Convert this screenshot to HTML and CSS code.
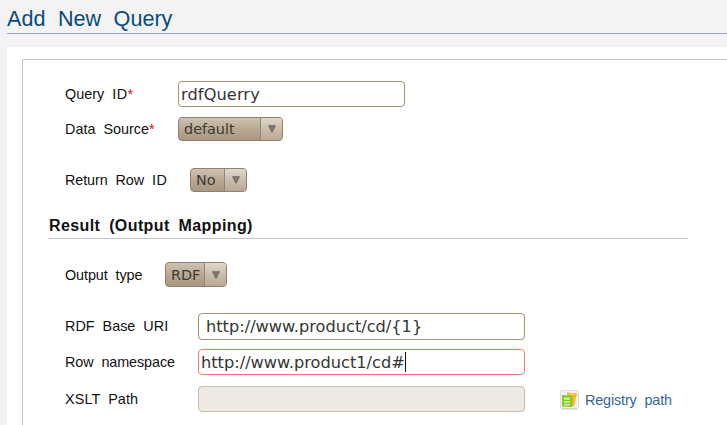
FILE: index.html
```html
<!DOCTYPE html>
<html lang="en">
<head>
<meta charset="utf-8">
<title>Add New Query</title>
<link rel="stylesheet" href="styles.css">
</head>
<body>
<h1 class="title">Add New Query</h1>
<main class="page">
<form class="panel">
  <div class="row query-id"><label class="label">Query <span class="caps">ID</span><span class="req">*</span></label><div class="field short">rdfQuerry</div></div>
  <div class="row data-source"><label class="label">Data Source<span class="req">*</span></label><div class="select"><span class="value">default</span><span class="arrow"><svg viewBox="0 0 8 8" width="8" height="8"><path d="M.6.7h6.8L4 7.3z"/></svg></span></div></div>
  <div class="row row-id"><label class="label">Return Row <span class="caps">ID</span></label><div class="select"><span class="value">No</span><span class="arrow"><svg viewBox="0 0 8 8" width="8" height="8"><path d="M.6.7h6.8L4 7.3z"/></svg></span></div></div>
  <h2 class="section">Result (Output Mapping)</h2>
  <div class="row output"><label class="label">Output type</label><div class="select"><span class="value">RDF</span><span class="arrow"><svg viewBox="0 0 8 8" width="8" height="8"><path d="M.6.7h6.8L4 7.3z"/></svg></span></div></div>
  <div class="row base"><label class="label">RDF Base URI</label><div class="field tall">http://www.product/cd/{1}</div></div>
  <div class="row namespace"><label class="label">Row namespace</label><div class="field focused">http://www.product1/cd#<span class="caret"></span></div></div>
  <div class="row xslt"><label class="label">XSLT Path</label><div class="field disabled"></div>
    <a class="registry"><svg class="icon" viewBox="0 0 20 20" width="20" height="20"><rect x=".5" y=".5" width="18" height="18" rx="2" fill="#f2f2f2" stroke="#dcdcdc"/><path d="M1.500 19h16" stroke="#c8c8c8"/><path d="M7 2.500l10 .8-3 12.700-5 .5z" fill="#efb02a"/><path d="M9 3.800l6 .5M13.500 8h2M13.500 11.500h1.300" stroke="#ffe08a"/><path d="M2 5l10 .5v11.500L2 16.500z" fill="#84c928"/><path d="M4 7.500h6v2.200H4zM4 11h6v1.700H4zM4 14h6v1.500H4z" fill="#d3efa4"/></svg>Registry path</a>
  </div>
</form>
</main>
</body>
</html>
```
FILE: styles.css
```css
* { box-sizing: border-box; }
body {
  margin: 0;
  height: 425px;
  overflow: hidden;
  background: #f3f3f3;
  font-family: "Liberation Sans", sans-serif;
  font-size: 14.4px;
  color: #111;
}
.title {
  margin: 0 0 0 7px;
  height: 34px;
  border-bottom: 1px solid #9aa5c3;
  font-size: 21.6px;
  font-weight: 400;
  line-height: 38px;
  word-spacing: 6.5px;
  color: #084b7c;
}
.page {
  margin: 13px 0 0 7px;
  padding: 12px 0 0 15px;
  background: #fff;
  height: 378px;
}
.panel {
  border: 1px solid #c4c4c4;
  border-width: 1px 0 0 1px;
  height: 366px;
  padding: 21px 0 0 26px;
}
.row { display: flex; align-items: center; padding-left: 16px; }
.label { width: 133px; flex: none; white-space: nowrap; word-spacing: 4px; }
.caps { letter-spacing: .5px; }
.req { color: #f00; }
.query-id .label, .data-source .label { width: 113px; }
.data-source { margin-top: 10px; }
.row-id { margin-top: 27px; }
.row-id .label { width: 125px; letter-spacing: -.1px; }
.section {
  margin: 23px 0 0;
  width: 639px;
  height: 24px;
  border-bottom: 1px solid #c4c4c4;
  font-size: 16px;
  line-height: 22px;
  letter-spacing: .4px;
  word-spacing: 4px;
}
.output { margin-top: 23px; }
.output .label { width: 100px; letter-spacing: -.1px; }
.base { margin-top: 26px; }
.base .label { padding-bottom: 2px; }
.namespace { margin-top: 9px; }
.namespace .label { letter-spacing: -.1px; }
.xslt { margin-top: 11px; }
.xslt .label { letter-spacing: .1px; padding-bottom: 1px; }
.field {
  display: flex;
  align-items: center;
  width: 327px;
  height: 26px;
  flex: none;
  border: 1px solid #9e9172;
  border-radius: 4px;
  padding-left: 2px;
  background: #fff;
  font: 16.2px "DejaVu Sans", sans-serif;
  color: #353535;
}
.short { width: 227px; letter-spacing: .1px; }
.tall { height: 27px; padding-left: 7px; }
.focused { border-color: #f87a64; }
.disabled { background: #eee9e2; border-color: #ccbda4; }
.caret { width: 1px; height: 20px; background: #111; }
.select {
  display: flex;
  width: 57px;
  height: 24px;
  border: 1px solid #8f8071;
  border-radius: 4px;
  background: linear-gradient(#cfc2b2, #b7a791 55%, #a89880);
  font: 14.4px "DejaVu Sans", sans-serif;
  color: #3c3b37;
  overflow: hidden;
}
.data-source .select { width: 105px; }
.output .select { width: 62px; height: 25px; }
.value { flex: 1; padding-left: 5px; line-height: 23px; }
.output .value { line-height: 25px; }
.arrow {
  width: 22px;
  display: flex;
  align-items: center;
  justify-content: center;
  border-left: 1px solid #93857a;
  background: linear-gradient(#e0d8cb, #c8bba9 55%, #b8aa96);
}
.arrow path { fill: #817a71; stroke: #625c55; stroke-width: .8; }
.registry {
  display: flex;
  align-items: center;
  margin: 2px 0 0 35px;
  height: 20px;
  letter-spacing: -.15px;
  word-spacing: 4px;
  color: #336699;
  white-space: nowrap;
}
.icon { margin-right: 5px; }
```
